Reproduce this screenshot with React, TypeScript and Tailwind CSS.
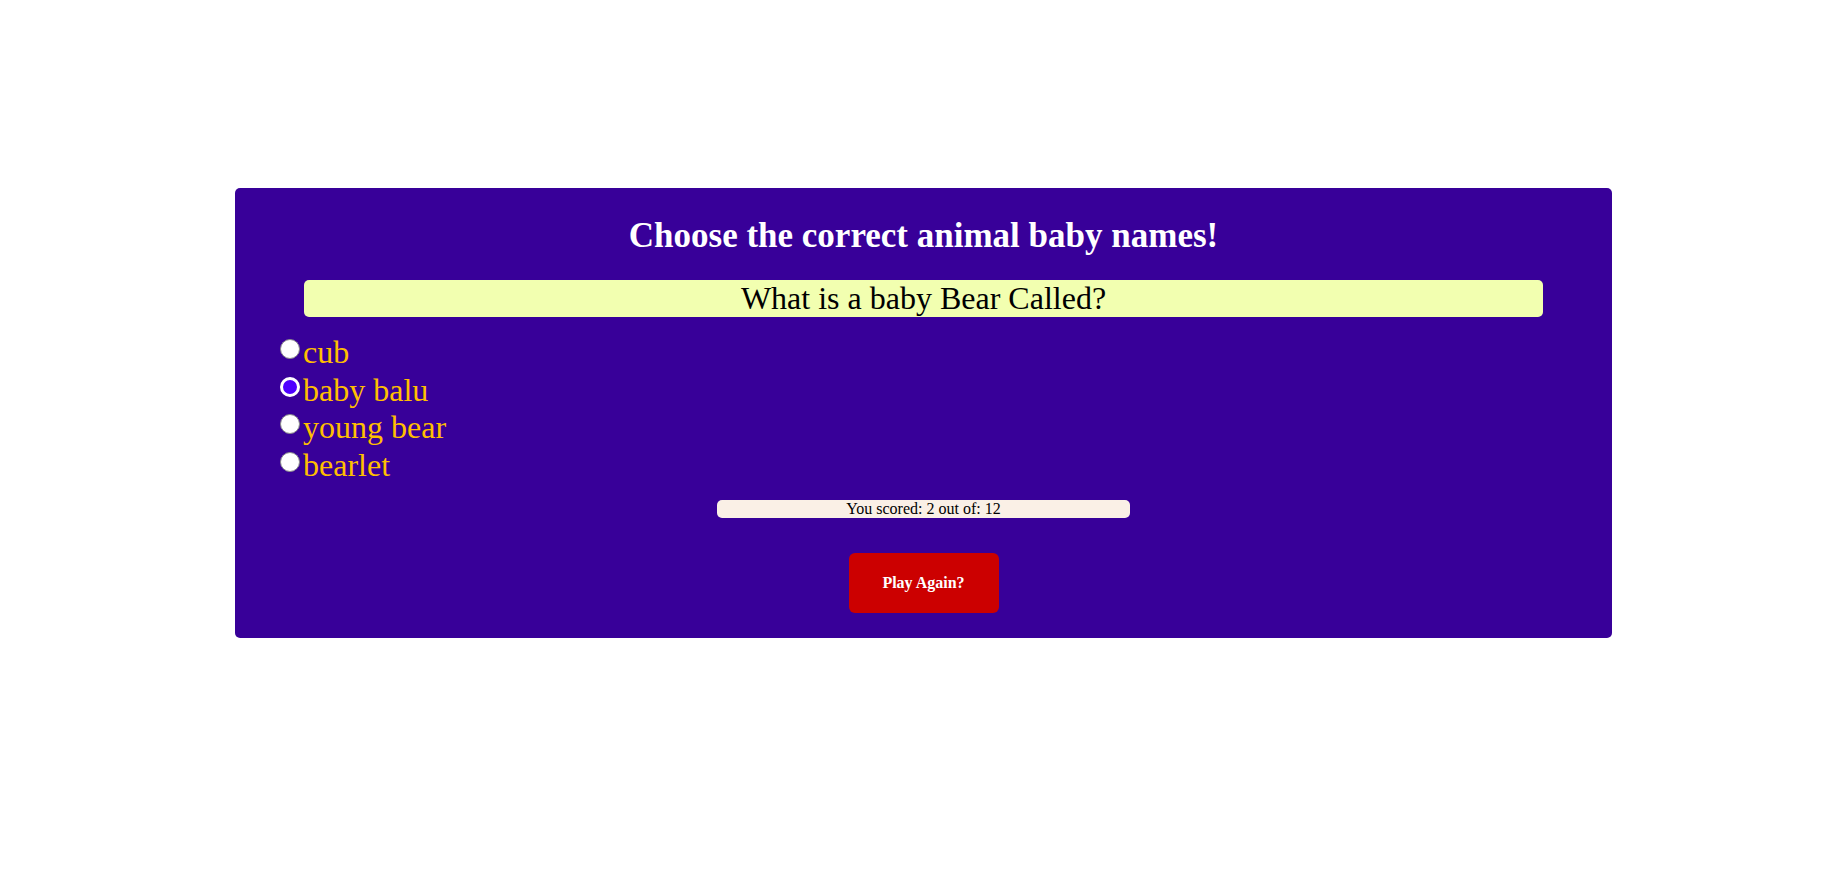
import { useState } from "react";

const serif = "font-['Liberation_Serif','Times_New_Roman',serif]";

const options = ["cub", "baby balu", "young bear", "bearlet"];

export default function App() {
  const [answer, setAnswer] = useState("baby balu");

  return (
    <div className={`min-h-screen bg-white pt-[188px] ${serif}`}>
      <main className="ml-[235px] flex w-[1377px] flex-col rounded-[5px] bg-[#380099] pb-[25px] pt-[28px]">
        <h1 className="text-center text-[35px] font-bold leading-[normal] text-white">
          Choose the correct animal baby names!
        </h1>

        <p className="mx-auto mt-[24px] w-[90%] rounded-[5px] bg-[#f2ffb0] text-center text-[32px] leading-[normal] text-black">
          What is a baby Bear Called?
        </p>

        <div className="mt-[17px] flex flex-col pl-[40px]">
          {options.map((option) => (
            <label key={option} className="flex h-[37.6px] items-start text-[32px] leading-[37.6px] text-[#ffbf00]">
              <input
                type="radio"
                name="answer"
                checked={answer === option}
                onChange={() => setAnswer(option)}
                className="ml-[5px] mr-[3px] mt-[5px] h-[20px] w-[20px] shrink-0 appearance-none rounded-full border border-[#8a8a8a] bg-white checked:border-[3px] checked:border-white checked:bg-[#4f00ff]"
              />
              {option}
            </label>
          ))}
        </div>

        <p className="mx-auto mt-[16px] w-[30%] rounded-[5px] bg-[#faf0e6] text-center text-[16px] leading-[normal] text-black">
          You scored: 2 out of: 12
        </p>

        <button
          type="button"
          className="mx-auto mt-[35px] flex h-[60px] w-[150px] items-center justify-center rounded-[6px] bg-[#cc0000] text-[16px] font-bold text-white"
        >
          Play Again?
        </button>
      </main>
    </div>
  );
}
